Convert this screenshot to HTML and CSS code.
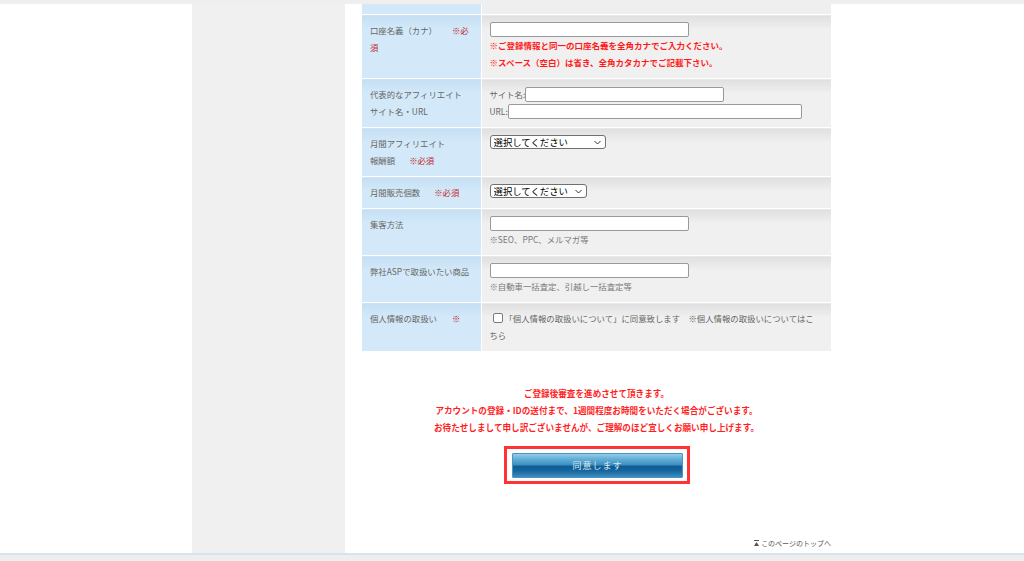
FILE: index.html
```html
<!DOCTYPE html>
<html lang="ja">
<head>
<meta charset="utf-8">
<title>登録フォーム</title>
<link rel="stylesheet" href="styles.css">
</head>
<body>
<div class="topbar"></div>
<div class="page">
  <div class="gutter"></div>
  <aside class="side"></aside>
  <main class="main">
    <table class="form">
      <colgroup><col class="col-label"><col class="col-field"></colgroup>
      <tr class="partial"><th><div class="stub"></div></th><td><div class="stub"></div></td></tr>
      <tr>
        <th>口座名義（カナ）<span class="req gap15">※必</span><span class="req">須</span></th>
        <td>
          <input class="text w199 block" type="text">
          <p class="warn">※ご登録情報と同一の口座名義を全角カナでご入力ください。</p>
          <p class="warn">※スペース（空白）は省き、全角カタカナでご記載下さい。</p>
        </td>
      </tr>
      <tr>
        <th>代表的なアフィリエイト<br>サイト名・URL</th>
        <td>
          <div class="line">サイト名:<input class="text w199 inline" type="text"></div>
          <div class="line">URL:<input class="text w294 inline" type="text"></div>
        </td>
      </tr>
      <tr>
        <th>月間アフィリエイト<br>報酬額<span class="req gap14">※必須</span></th>
        <td>
          <span class="selwrap"><select class="sel w116"><option>選択してください</option></select><svg class="chev" width="7" height="5" viewBox="0 0 7 5"><path d="M0.5 1 L3.5 4 L6.5 1" fill="none" stroke="#333" stroke-width="1"/></svg></span>
        </td>
      </tr>
      <tr>
        <th>月間販売個数<span class="req gap14">※必須</span></th>
        <td>
          <span class="selwrap"><select class="sel w97"><option>選択してください</option></select><svg class="chev" width="7" height="5" viewBox="0 0 7 5"><path d="M0.5 1 L3.5 4 L6.5 1" fill="none" stroke="#333" stroke-width="1"/></svg></span>
        </td>
      </tr>
      <tr>
        <th>集客方法</th>
        <td>
          <input class="text w199 block" type="text">
          <p class="hint">※SEO、PPC、メルマガ等</p>
        </td>
      </tr>
      <tr>
        <th>弊社ASPで取扱いたい商品</th>
        <td>
          <input class="text w199 block" type="text">
          <p class="hint">※自動車一括査定、引越し一括査定等</p>
        </td>
      </tr>
      <tr>
        <th>個人情報の取扱い<span class="req gap15">※</span></th>
        <td class="consent"><input class="check" type="checkbox">「個人情報の取扱いについて」に同意致します　※個人情報の取扱いについてはこちら</td>
      </tr>
    </table>

    <div class="notice">
      <p>ご登録後審査を進めさせて頂きます。</p>
      <p>アカウントの登録・IDの送付まで、1週間程度お時間をいただく場合がございます。</p>
      <p>お待たせしまして申し訳ございませんが、ご理解のほど宜しくお願い申し上げます。</p>
    </div>

    <div class="actions">
      <span class="frame"><button class="agree" type="button">同意します</button></span>
    </div>

    <div class="pagetop"><svg class="upicon" width="5" height="7" viewBox="0 0 5 7"><rect x="0" y="0" width="5" height="1" fill="#555"/><path d="M2.5 2 L5 6 L0 6 Z" fill="#555"/></svg>このページのトップへ</div>
  </main>
</div>
<div class="footer"></div>
</body>
</html>
```

FILE: styles.css
```css
* { box-sizing: border-box; }
html, body { margin: 0; padding: 0; }
body {
  background: #efefef;
  font-family: "Noto Sans CJK JP", "Noto Sans", sans-serif;
  color: #666;
  height: 561px;
  overflow: hidden;
}
.topbar { height: 4px; background: #efefef; }
.page { display: flex; height: 549px; background: #fff; }
.gutter { width: 192px; flex: none; }
.side { width: 153px; flex: none; background: #f0f0f0; }
.main {
  flex: 1;
  display: flex;
  flex-direction: column;
  align-items: flex-start;
  padding: 0 0 4px 17px;
}

.form {
  width: 469px;
  table-layout: fixed;
  border-collapse: collapse;
  font-size: 8.4px;
  line-height: 17px;
}
.col-label { width: 119px; }
.col-field { width: 350px; }
.form th {
  text-align: left;
  font-weight: normal;
  color: #666;
  vertical-align: top;
  padding: 7px 8px;
  background: linear-gradient(#c5def2, #d3e9f9 14px);
  border-bottom: 1px solid #fff;
  border-right: 1px solid #fff;
}
.form td {
  vertical-align: top;
  padding: 7px 8px;
  background: linear-gradient(#dfdfdf, #f0f0f0 14px);
  border-bottom: 1px solid #fff;
}
.form .partial th, .form .partial td { padding: 0; background: #d3e9f9; }
.form .partial td { background: #efefef; }
.stub { height: 10px; }

.req { color: #c0282d; }
.gap15 { margin-left: 15px; }
.gap14 { margin-left: 14px; }

.text {
  height: 15px;
  border: 1px solid #999;
  border-radius: 2px;
  background: #fff;
  padding: 0 2px;
  margin: 0;
  font-size: 9px;
}
.block { display: block; }
.inline { display: inline-block; vertical-align: middle; height: 15px; margin-top: -2px; }
.w199 { width: 199px; }
.w294 { width: 294px; }
.line { height: 17px; }

.warn {
  margin: 0;
  color: #ff1a1a;
  font-weight: bold;
  font-size: 8.5px;
  line-height: 17px;
  white-space: nowrap;
}
.hint {
  margin: 0;
  color: #777;
  font-size: 8.4px;
  line-height: 17px;
}

.selwrap { position: relative; display: inline-block; height: 14px; vertical-align: top; }
.sel {
  -webkit-appearance: none;
  appearance: none;
  display: block;
  height: 14px;
  border: 1px solid #707070;
  border-radius: 3px;
  background: #fff;
  color: #000;
  font-family: "Noto Sans CJK JP", sans-serif;
  font-size: 9.4px;
  line-height: 12px;
  padding: 0 0 0 3px;
  margin: 0;
}
.w116 { width: 116px; }
.w97 { width: 97px; }
.chev { position: absolute; right: 5px; top: 5px; }

.form td.consent { line-height: 17px; color: #666; padding-right: 13px; }
.check {
  -webkit-appearance: none;
  appearance: none;
  width: 10px;
  height: 10px;
  border: 1px solid #7a7a7a;
  border-radius: 2px;
  background: #fff;
  margin: 0 2px 0 3px;
  vertical-align: -1px;
}

.notice {
  margin-top: 33px;
  width: 469px;
  text-align: center;
  color: #ff1f1f;
  font-weight: bold;
  font-size: 8.6px;
  line-height: 17px;
}
.notice p { margin: 0; }

.actions {
  width: 469px;
  margin-top: 10px;
  display: flex;
  justify-content: center;
  padding-left: 1px;
}
.frame {
  display: inline-block;
  border: 3px solid #ff3333;
  padding: 4px 4px 3px 5px;
  background: #fff;
}
.agree {
  display: block;
  width: 171px;
  height: 25px;
  border: 1px solid #4c93c2;
  border-radius: 1px;
  margin: 0;
  padding: 0;
  background: linear-gradient(180deg, #92cde8 0%, #62aed8 22%, #3d90c4 46%, #0f5c93 54%, #16659c 72%, #3b8cbf 100%);
  color: #dfe7ee;
  font-family: "Noto Sans CJK JP", sans-serif;
  font-size: 9px;
  letter-spacing: 1px;
}

.pagetop {
  margin-top: auto;
  width: 469px;
  text-align: right;
  font-size: 7px;
  line-height: 12px;
  color: #555;
}
.upicon { vertical-align: -1px; margin-right: 2px; }

.footer {
  height: 8px;
  border-top: 2px solid #d6e4f0;
  background: #eeeeee;
}
```
